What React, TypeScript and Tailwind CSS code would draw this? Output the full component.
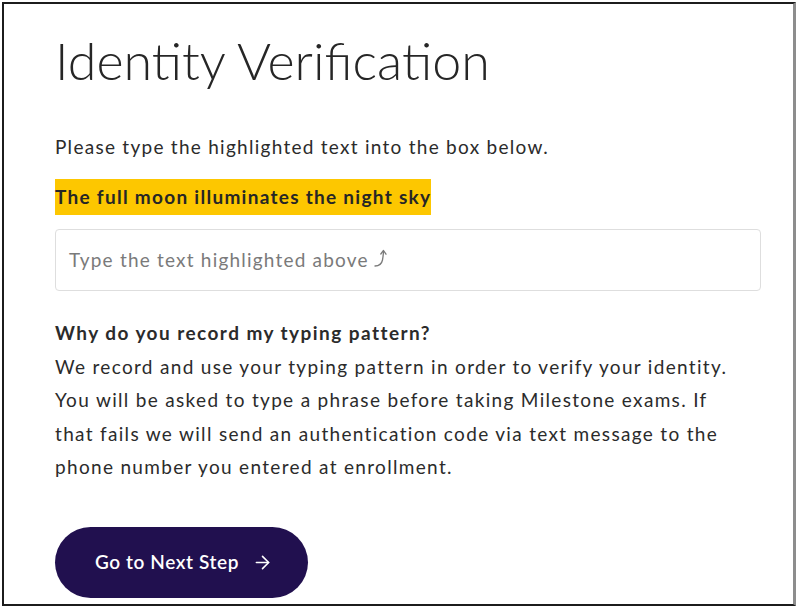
import { ArrowRight } from 'lucide-react'

export default function App() {
  return (
    <div className="w-[800px] h-[611px] bg-white pl-[2px] pt-[2px] font-['Lato',_'Noto_Sans',_sans-serif]">
      <div className="w-[794px] h-[604px] overflow-hidden border-2 border-[#1c1c1c] border-r-[3px] border-r-[#8d8d8d]">
        <div className="pl-[51px] pt-[25px]">
          {/* Title */}
          <h1 className="text-[52px] leading-[62px] font-light text-[#262626]">Identity Verification</h1>

          <p className="mt-[42px] text-[19px] leading-[28px] tracking-[1.27px] text-[#2b2b2b]">
            Please type the highlighted text into the box below.
          </p>

          <div className="mt-[18px]">
            <span className="inline-block h-[36px] bg-[#fdc700] text-[19px] leading-[36px] font-bold tracking-[1.28px] text-[#262626]">
              The full moon illuminates the night sky
            </span>
          </div>

          {/* Typing box */}
          <div className="mt-[14px] w-[706px] h-[62px] rounded border border-[#dedede] flex items-center pl-[13px] text-[19px] tracking-[1.2px] text-[#7a7a7a]">
            <span>Type the text highlighted above</span>
            <svg className="ml-[5px] -mt-[4px]" width="14" height="20" viewBox="0 0 14 20" fill="none" stroke="#7a7a7a" strokeWidth="1.3" strokeLinecap="round" strokeLinejoin="round">
              <path d="M1 18c3.5 0 6.5-1.3 7.5-6 .5-2.6.8-5.5 1-8.5" />
              <path d="M6.8 6 9.5 2.5 12 6.2" />
            </svg>
          </div>

          {/* Explanation */}
          <div className="mt-[25px] text-[19px] leading-[33.5px] tracking-[1.32px] text-[#2b2b2b]">
            <p className="font-bold tracking-[1.45px]">Why do you record my typing pattern?</p>
            <p>
              We record and use your typing pattern in order to verify your identity.
              <br />
              You will be asked to type a phrase before taking Milestone exams. If
              <br />
              that fails we will send an authentication code via text message to the
              <br />
              phone number you entered at enrollment.
            </p>
          </div>

          <button className="mt-[43px] w-[253px] h-[71px] rounded-full bg-[#21104f] text-white flex items-center pl-[40px] gap-[13px] text-[19px] font-semibold tracking-[0.6px]">
            <span>Go to Next Step</span>
            <ArrowRight className="w-[21px] h-[21px]" strokeWidth={1.8} />
          </button>
        </div>
      </div>
    </div>
  )
}
